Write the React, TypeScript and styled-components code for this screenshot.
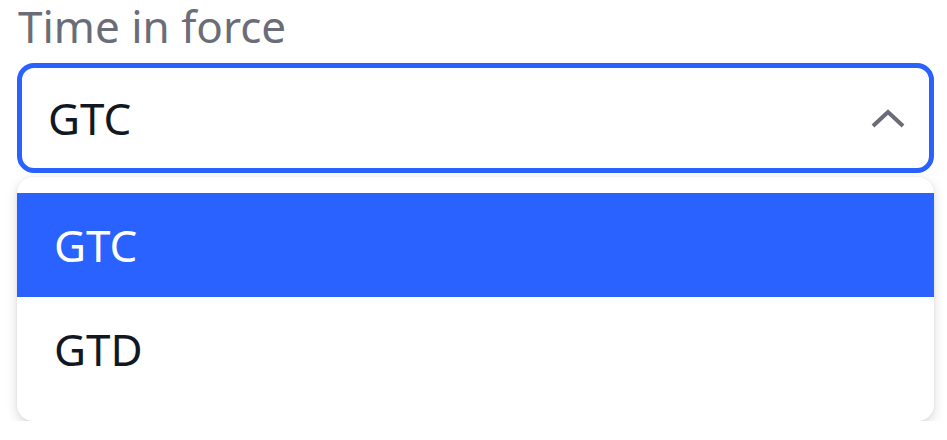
import * as React from 'react'
import styled, { createGlobalStyle } from 'styled-components'

const BLUE = '#2962ff'

const GlobalStyle = createGlobalStyle`
  html, body {
    margin: 0;
    padding: 0;
    background: #ffffff;
  }
  body {
    font-family: 'Noto Sans', 'Open Sans', sans-serif;
  }
`

const Field = styled.div`
  width: 917px;
  padding-left: 17px;
  padding-top: 2px;
  display: flex;
  flex-direction: column;
`

const Label = styled.div`
  font-size: 44px;
  line-height: 48px;
  color: #6a6d78;
  padding-left: 1px;
`

const SelectBox = styled.div`
  margin-top: 13px;
  height: 110px;
  box-sizing: border-box;
  border: 5px solid ${BLUE};
  border-radius: 17px;
  display: flex;
  align-items: center;
  justify-content: space-between;
  padding: 0 24px 0 26px;
  background: #ffffff;
`

const Value = styled.span`
  font-size: 44px;
  line-height: 1.2;
  color: #131722;
`

const Chevron = styled.svg`
  width: 34px;
  height: 20px;
  display: block;
`

const Menu = styled.div`
  margin-top: 4px;
  padding: 16px 0 20px;
  border-radius: 16px;
  background: #ffffff;
  box-shadow: 0 4px 12px rgba(0, 0, 0, 0.15), 0 0 3px rgba(0, 0, 0, 0.07);
  overflow: hidden;
`

const Option = styled.div<{ active?: boolean }>`
  height: 104px;
  display: flex;
  align-items: center;
  padding-left: 37px;
  font-size: 44px;
  line-height: 1.2;
  background: ${(p) => (p.active ? BLUE : '#ffffff')};
  color: ${(p) => (p.active ? '#ffffff' : '#131722')};
`

const options = ['GTC', 'GTD']

const App: React.FC = () => {
  const selected = 'GTC'
  return (
    <>
      <GlobalStyle />
      <Field>
        <Label>Time in force</Label>
        <SelectBox>
          <Value>{selected}</Value>
          <Chevron viewBox="0 0 34 20">
            <path d="M2 18 L17 4 L32 18" fill="none" stroke="#6a6d78" strokeWidth="4" />
          </Chevron>
        </SelectBox>
        <Menu>
          {options.map((o) => (
            <Option key={o} active={o === selected}>
              {o}
            </Option>
          ))}
        </Menu>
      </Field>
    </>
  )
}

export default App
